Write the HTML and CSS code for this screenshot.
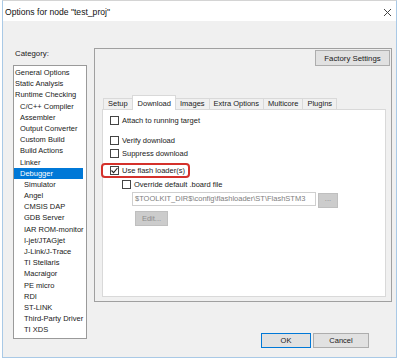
FILE: index.html
```html
<!DOCTYPE html>
<html lang="en">
<head>
    <meta charset="UTF-8">
    <title>Options for node "test_proj"</title>
    <link rel="stylesheet" href="styles.css">
</head>
<body>
    <div class="window">
        <div class="titlebar">
            <span class="title">Options for node "test_proj"</span>
            <svg class="close" width="9" height="9" viewBox="0 0 9 9">
                <path d="M1 1 L8 8 M8 1 L1 8" stroke="#444" stroke-width="1" fill="none"/>
            </svg>
        </div>
        <div class="client">
            <div class="sidebar">
                <div class="cat-label">Category:</div>
                <ul class="listbox">
                    <li>General Options</li>
                    <li>Static Analysis</li>
                    <li>Runtime Checking</li>
                    <li class="sub">C/C++ Compiler</li>
                    <li class="sub">Assembler</li>
                    <li class="sub">Output Converter</li>
                    <li class="sub">Custom Build</li>
                    <li class="sub">Build Actions</li>
                    <li class="sub">Linker</li>
                    <li class="sub selected">Debugger</li>
                    <li class="sub2">Simulator</li>
                    <li class="sub2">Angel</li>
                    <li class="sub2">CMSIS DAP</li>
                    <li class="sub2">GDB Server</li>
                    <li class="sub2">IAR ROM-monitor</li>
                    <li class="sub2">I-jet/JTAGjet</li>
                    <li class="sub2">J-Link/J-Trace</li>
                    <li class="sub2">TI Stellaris</li>
                    <li class="sub2">Macraigor</li>
                    <li class="sub2">PE micro</li>
                    <li class="sub2">RDI</li>
                    <li class="sub2">ST-LINK</li>
                    <li class="sub2">Third-Party Driver</li>
                    <li class="sub2">TI XDS</li>
                </ul>
            </div>
            <div class="main">
                <div class="frame">
                    <div class="frame-top">
                        <button class="btn factory">Factory Settings</button>
                    </div>
                    <div class="tabs">
                        <div class="tab">Setup</div>
                        <div class="tab active">Download</div>
                        <div class="tab">Images</div>
                        <div class="tab">Extra Options</div>
                        <div class="tab">Multicore</div>
                        <div class="tab">Plugins</div>
                    </div>
                    <div class="tab-panel">
                        <div class="row r1"><span class="check"></span>Attach to running target</div>
                        <div class="row r2"><span class="check"></span>Verify download</div>
                        <div class="row r3"><span class="check"></span>Suppress download</div>
                        <div class="row r4">
                            <span class="check">
                                <svg width="7" height="7" viewBox="0 0 7 7"><polyline points="0.5,3.5 2.6,5.6 6.5,1" stroke="#222" stroke-width="1.1" fill="none"/></svg>
                            </span>Use flash loader(s)
                            <span class="mark"></span>
                        </div>
                        <div class="row r5"><span class="check"></span>Override default .board file</div>
                        <div class="path-row">
                            <div class="path-input">$TOOLKIT_DIR$\config\flashloader\ST\FlashSTM3</div>
                            <div class="btn-dis browse">...</div>
                        </div>
                        <div class="btn-dis edit">Edit...</div>
                    </div>
                </div>
                <div class="buttons">
                    <button class="btn ok">OK</button>
                    <button class="btn cancel">Cancel</button>
                </div>
            </div>
        </div>
    </div>
</body>
</html>
```

FILE: styles.css
```css
body {
    margin: 0;
    background: #fff;
    font-family: "Liberation Sans", Arial, sans-serif;
    font-size: 7.5px;
    color: #1a1a1a;
}
.window {
    margin-left: 2px;
    width: 393px;
    height: 356px;
    border: 1px solid #a9c9e6;
    border-top: 1px solid #d4d4d4;
    display: flex;
    flex-direction: column;
}
.titlebar {
    height: 19px;
    background: #fff;
    display: flex;
    align-items: center;
    justify-content: space-between;
    padding: 1px 4px 0 2px;
}
.title {
    font-size: 8.6px;
    color: #111;
}
.close {
    margin-top: 2px;
}
.client {
    flex: 1;
    background: #f0f0f0;
    display: flex;
    padding: 27px 0 0 10px;
}
.sidebar {
    width: 74px;
}
.cat-label {
    line-height: 11px;
    padding-left: 2px;
    margin-bottom: 6px;
    font-size: 7.8px;
}
.listbox {
    list-style: none;
    margin: 0;
    padding: 1px 0 0 0;
    height: 271px;
    border: 1px solid #9a9a9a;
    background: #fff;
}
.listbox li {
    line-height: 11.2px;
    height: 11.2px;
    padding-left: 1px;
    white-space: nowrap;
}
.listbox li.sub {
    padding-left: 6px;
}
.listbox li.sub2 {
    padding-left: 10px;
}
.listbox li.selected {
    background: #0078d7;
    color: #fff;
    margin-right: 3px;
}
.main {
    margin-left: 7px;
    width: 298px;
    display: flex;
    flex-direction: column;
}
.frame {
    height: 248px;
    border: 1px solid #a0a0a0;
    padding: 0 5px 4px 7px;
    display: flex;
    flex-direction: column;
}
.frame-top {
    display: flex;
    justify-content: flex-end;
    padding-top: 1px;
    margin-right: -4px;
    height: 46px;
}
.btn {
    font-family: inherit;
    font-size: 7.5px;
    color: #1a1a1a;
    background: #e1e1e1;
    border: 1px solid #adadad;
    padding: 0;
}
.factory {
    width: 75px;
    height: 16px;
    font-size: 7.8px;
}
.tabs {
    display: flex;
    align-items: flex-end;
    height: 14px;
    padding-left: 1px;
    position: relative;
    z-index: 1;
    margin-bottom: -1px;
}
.tab {
    height: 10px;
    line-height: 10px;
    padding: 0 4px;
    border: 1px solid #d9d9d9;
    border-bottom: none;
    background: #f0f0f0;
    margin-right: -1px;
    margin-bottom: 1px;
}
.tab.active {
    height: 14px;
    line-height: 15px;
    background: #fff;
    margin-bottom: 0;
    padding: 0 4px 0 5px;
}
.tab-panel {
    flex: 1;
    background: #fff;
    border: 1px solid #d9d9d9;
    padding: 4px 0 0 7px;
}
.row {
    display: flex;
    align-items: center;
    height: 12px;
    white-space: nowrap;
}
.check {
    width: 7px;
    height: 7px;
    border: 1px solid #444;
    background: #fff;
    margin-right: 3px;
    display: flex;
    align-items: center;
    justify-content: center;
}
.r2 { margin-top: 8px; }
.r3 { margin-top: 1px; }
.r4 {
    margin-top: 5px;
    position: relative;
}
.r5 {
    margin-top: 2px;
    margin-left: 12px;
}
.mark {
    position: absolute;
    left: -9px;
    top: -1px;
    width: 85px;
    height: 11px;
    border: 2px solid #d4312b;
    border-radius: 4px;
}
.path-row {
    display: flex;
    margin-top: 2px;
    margin-left: 22px;
}
.path-input {
    width: 180px;
    height: 12px;
    line-height: 12px;
    border: 1px solid #cfcfcf;
    padding-left: 2px;
    color: #808080;
    white-space: nowrap;
}
.btn-dis {
    background: #cccccc;
    border: 1px solid #bfbfbf;
    color: #8c8c8c;
    text-align: center;
}
.browse {
    margin-left: 2px;
    margin-top: 1px;
    width: 18px;
    height: 13px;
    line-height: 10px;
}
.edit {
    margin-left: 25px;
    margin-top: 3px;
    width: 31px;
    height: 13px;
    line-height: 13px;
}
.buttons {
    margin-top: auto;
    margin-bottom: 9px;
    margin-right: 23px;
    display: flex;
    justify-content: flex-end;
    gap: 2px;
}
.ok {
    width: 50px;
    height: 15px;
    border-color: #0078d7;
}
.cancel {
    width: 56px;
    height: 15px;
}
```
